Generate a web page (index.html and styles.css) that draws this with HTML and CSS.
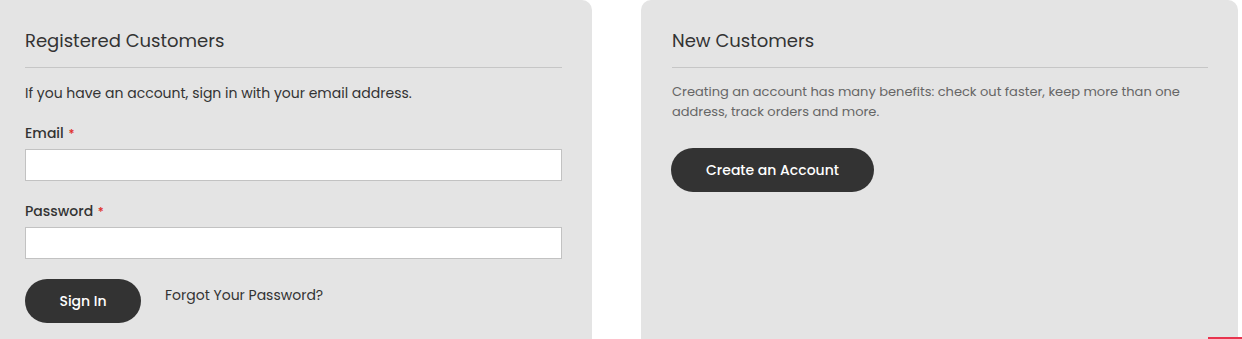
FILE: index.html
```html
<!DOCTYPE html>
<html lang="en">
<head>
    <meta charset="UTF-8">
    <meta name="viewport" content="width=device-width, initial-scale=1.0">
    <title>Customer Login</title>
    <link rel="stylesheet" href="styles.css">
</head>
<body>
    <div class="login-container">
        <div class="block block-login">
            <h2 class="block-title">Registered Customers</h2>
            <p class="block-note">If you have an account, sign in with your email address.</p>
            <form class="login-form">
                <div class="field">
                    <label for="email">Email <span class="req">*</span></label>
                    <input type="email" id="email">
                </div>
                <div class="field">
                    <label for="pass">Password <span class="req">*</span></label>
                    <input type="password" id="pass">
                </div>
                <div class="actions">
                    <button type="button" class="btn btn-signin">Sign In</button>
                    <a href="#" class="remind">Forgot Your Password?</a>
                </div>
            </form>
        </div>

        <div class="block block-new">
            <h2 class="block-title">New Customers</h2>
            <p class="block-note small">Creating an account has many benefits: check out faster, keep more than one address, track orders and more.</p>
            <button type="button" class="btn btn-create">Create an Account</button>
        </div>
    </div>

    <div class="back-top"></div>
</body>
</html>
```

FILE: styles.css
```css
body {
    font-family: 'Poppins', 'Open Sans', sans-serif;
    margin: 0;
    padding: 0;
    background-color: #fff;
    color: #333;
    overflow: hidden;
}
.login-container {
    display: flex;
    gap: 49px;
    padding-right: 4px;
    height: 339px;
}
.block {
    background-color: #e4e4e4;
    box-sizing: border-box;
}
.block-login {
    width: 592px;
    padding: 30px 30px 0 25px;
    border-top-right-radius: 10px;
}
.block-new {
    flex: 1;
    padding: 30px 30px 0 31px;
    border-radius: 10px 10px 0 0;
}
.block-title {
    font-size: 18px;
    font-weight: 400;
    color: #333;
    margin: 0;
    padding-bottom: 15px;
    border-bottom: 1px solid #c6c6c6;
    line-height: 22px;
}
.block-note {
    font-size: 14px;
    margin: 15px 0 0;
    line-height: 20px;
}
.block-note.small {
    font-size: 13px;
    color: #666;
    margin-top: 14px;
}
.field {
    margin-top: 20px;
}
.field label {
    display: block;
    height: 20px;
    font-size: 14px;
    font-weight: 500;
    margin-bottom: 6px;
    line-height: 20px;
}
.req {
    color: #e02b27;
    font-size: 12px;
    line-height: 1;
    margin-left: 1px;
}
.field input {
    display: block;
    width: 100%;
    height: 32px;
    box-sizing: border-box;
    border: 1px solid #c2c2c2;
    background: #fff;
}
.actions {
    display: flex;
    align-items: flex-start;
    gap: 24px;
    margin-top: 20px;
}
.btn {
    background-color: #333;
    color: #fff;
    border: none;
    height: 44px;
    border-radius: 22px;
    font-family: inherit;
    font-size: 14px;
    font-weight: 500;
}
.btn-signin {
    width: 116px;
}
.btn-create {
    width: 203px;
    margin-top: 26px;
    margin-left: -1px;
}
.remind {
    color: #333;
    text-decoration: none;
    font-size: 14px;
    margin-top: 6px;
}
.back-top {
    position: fixed;
    right: 0;
    bottom: 0;
    width: 34px;
    height: 2px;
    background-color: #e8344e;
}
```
